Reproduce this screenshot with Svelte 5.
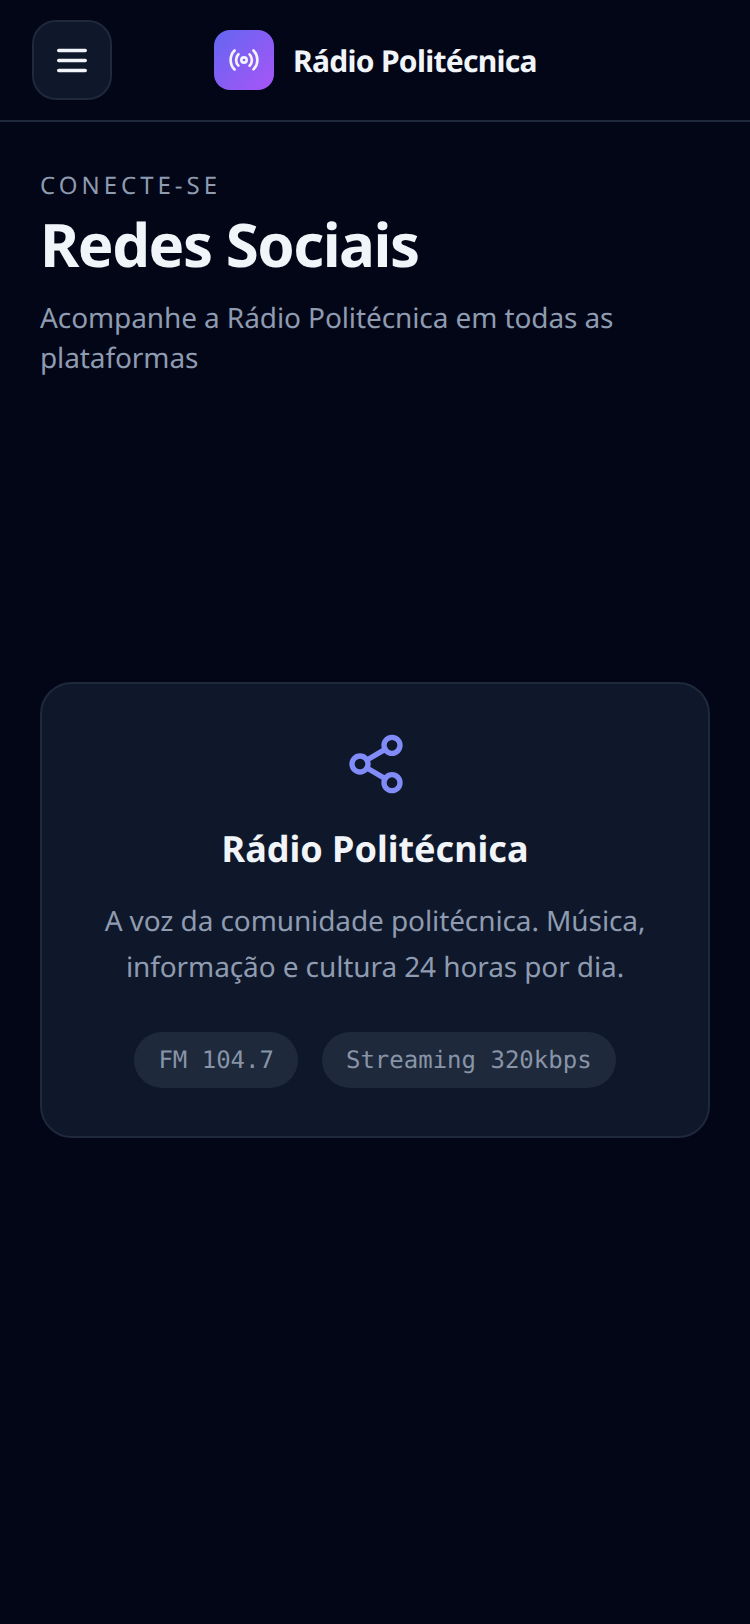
<script>
  const tags = ['FM 104.7', 'Streaming 320kbps'];
</script>

<div class="page">
  <header class="top">
    <button class="menu" aria-label="Menu">
      <svg width="32" height="32" viewBox="0 0 32 32" fill="none" stroke="#f1f5f9" stroke-width="3.4" stroke-linecap="round">
        <path d="M2.7 6.5h26.6M2.7 16.5h26.6M2.7 26.5h26.6" />
      </svg>
    </button>
    <div class="brand">
      <div class="logo">
        <svg width="32" height="32" viewBox="0 0 24 24" fill="none" stroke="#f1f5f9" stroke-width="2" stroke-linecap="round" stroke-linejoin="round">
          <circle cx="12" cy="12" r="2" />
          <path d="M4.9 19.1C1 15.2 1 8.8 4.9 4.9M7.8 16.2c-2.3-2.3-2.3-6.1 0-8.5M16.2 7.8c2.3 2.3 2.3 6.1 0 8.5M19.1 4.9C23 8.8 23 15.1 19.1 19" />
        </svg>
      </div>
      <span class="name">Rádio Politécnica</span>
    </div>
  </header>

  <main class="content">
    <section class="intro">
      <p class="eyebrow">CONECTE-SE</p>
      <h1>Redes Sociais</h1>
      <p class="lead">Acompanhe a Rádio Politécnica em todas as plataformas</p>
    </section>

    <section class="card">
      <svg class="share" width="64" height="64" viewBox="0 0 24 24" fill="none" stroke="#818cf8" stroke-width="2" stroke-linecap="round" stroke-linejoin="round">
        <circle cx="18" cy="5" r="3" />
        <circle cx="6" cy="12" r="3" />
        <circle cx="18" cy="19" r="3" />
        <path d="M8.59 13.51l6.83 3.98M15.41 6.51l-6.82 3.98" />
      </svg>
      <h2>Rádio Politécnica</h2>
      <p class="desc">A voz da comunidade politécnica. Música, informação e cultura 24 horas por dia.</p>
      <div class="tags">
        {#each tags as tag}
          <span class="tag">{tag}</span>
        {/each}
      </div>
    </section>
  </main>
</div>

<style>
  :global(body) {
    margin: 0;
    background: #020617;
  }
  .page {
    min-height: 1624px;
    background: #020617;
    font-family: "Noto Sans", "Open Sans", sans-serif;
    color: #f1f5f9;
    text-rendering: geometricPrecision;
  }
  .top {
    display: flex;
    align-items: center;
    height: 120px;
    padding: 0 32px;
    border-bottom: 2px solid #1e293b;
  }
  .menu {
    display: flex;
    align-items: center;
    justify-content: center;
    width: 80px;
    height: 80px;
    padding: 0;
    background: #0f172a;
    border: 2px solid #1e293b;
    border-radius: 24px;
    box-sizing: border-box;
  }
  .brand {
    display: flex;
    align-items: center;
    gap: 19px;
    margin-left: 102px;
  }
  .logo {
    display: flex;
    align-items: center;
    justify-content: center;
    width: 60px;
    height: 60px;
    border-radius: 16px;
    background: linear-gradient(135deg, #6366f1, #a855f7);
  }
  .name {
    font-size: 30px;
    font-weight: 700;
    letter-spacing: -0.7px;
    white-space: nowrap;
  }
  .content {
    padding: 0 40px;
  }
  .intro {
    padding-top: 48px;
  }
  .eyebrow {
    margin: 0;
    font-size: 24px;
    line-height: 32px;
    letter-spacing: 4px;
    color: #8e9bb0;
  }
  h1 {
    margin: 4px 0 0;
    font-size: 60px;
    line-height: 76px;
    font-weight: 700;
    letter-spacing: -1.5px;
  }
  .lead {
    margin: 16px 0 0;
    font-size: 28px;
    line-height: 40px;
    letter-spacing: -0.1px;
    color: #8e9bb0;
  }
  .card {
    display: flex;
    flex-direction: column;
    align-items: center;
    box-sizing: border-box;
    margin-top: 304px;
    padding: 48px 40px;
    background: #0f172a;
    border: 2px solid #1e293b;
    border-radius: 32px;
    text-align: center;
  }
  .share {
    display: block;
    margin-left: 2px;
  }
  h2 {
    margin: 28px 0 0;
    font-size: 36px;
    line-height: 50px;
    font-weight: 700;
  }
  .desc {
    margin: 24px 0 0;
    font-size: 28px;
    line-height: 46px;
    letter-spacing: -0.1px;
    color: #8e9bb0;
  }
  .tags {
    display: flex;
    gap: 24px;
    margin-top: 42px;
  }
  .tag {
    display: flex;
    align-items: center;
    height: 56px;
    padding: 0 24px;
    border-radius: 28px;
    background: #1e293b;
    font-family: "DejaVu Sans Mono", "Liberation Mono", monospace;
    font-size: 24px;
    color: #8894a8;
  }
</style>
